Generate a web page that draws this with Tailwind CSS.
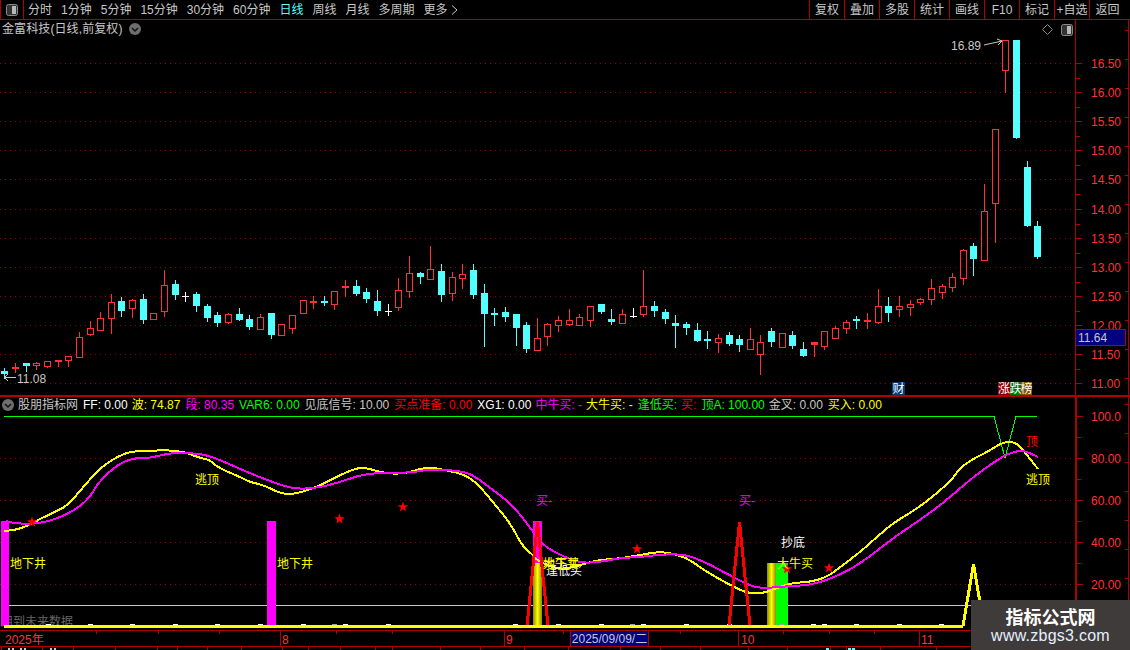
<!DOCTYPE html>
<html>
    <head>
        <meta charset="utf-8">
        <title>金富科技</title>
        <script src="https://cdn.jsdelivr.net/npm/@tailwindcss/browser@4"></script>
    </head>
    <body class="bg-black">
        <div class="relative flex flex-col w-[1130px] h-[650px] overflow-hidden bg-black text-[12px] leading-none text-[#c8c8c8] font-['Liberation_Sans','Noto_Sans_CJK_SC',sans-serif]">
            <!-- top toolbar -->
            <nav class="flex items-center h-[20px] shrink-0 border-b border-[#b00000]">
                <div class="flex items-center justify-center w-[24px] h-full border-x border-[#b00000]">
                    <svg width="12" height="12" viewBox="0 0 12 12"><rect x="0.5" y="0.5" width="11" height="11" rx="2" fill="#333" stroke="#8a8a8a"/><rect x="6" y="2" width="4" height="8" fill="#b8b8b8"/></svg>
                </div>
                <ul class="flex items-center ml-[4px] gap-[9px]">
                    <li>分时</li>
                    <li>1分钟</li>
                    <li>5分钟</li>
                    <li>15分钟</li>
                    <li>30分钟</li>
                    <li>60分钟</li>
                    <li class="text-[#54ffff]">日线</li>
                    <li>周线</li>
                    <li>月线</li>
                    <li>多周期</li>
                    <li class="flex items-center gap-[3px]">更多
                        <svg width="7" height="10" viewBox="0 0 7 10"><path d="M1 0.5 L6 5 L1 9.5" fill="none" stroke="#c8c8c8"/></svg>
                    </li>
                </ul>
                <ul class="flex h-full ml-auto mr-[5px] text-center">
                    <li class="flex items-center justify-center w-[35px] border-l border-[#b00000]">复权</li>
                    <li class="flex items-center justify-center w-[35px] border-l border-[#b00000]">叠加</li>
                    <li class="flex items-center justify-center w-[35px] border-l border-[#b00000]">多股</li>
                    <li class="flex items-center justify-center w-[35px] border-l border-[#b00000]">统计</li>
                    <li class="flex items-center justify-center w-[35px] border-l border-[#b00000]">画线</li>
                    <li class="flex items-center justify-center w-[35px] border-l border-[#b00000]">F10</li>
                    <li class="flex items-center justify-center w-[35px] border-l border-[#b00000]">标记</li>
                    <li class="flex items-center justify-center w-[35px] border-l border-[#b00000] whitespace-nowrap">+自选</li>
                    <li class="flex items-center justify-center w-[36px] border-l border-[#b00000]">返回</li>
                </ul>
            </nav>

            <!-- price chart -->
            <section class="relative h-[377px] shrink-0 border-b-2 border-[#b00000]">
                <svg id="price" class="absolute inset-0" width="1130" height="375" viewBox="0 20 1130 375" shape-rendering="crispEdges"></svg>
                <div class="absolute left-[2px] top-[3px] flex items-center gap-[6px]">
                    <span class="tracking-[0.1px]">金富科技(日线,前复权)</span>
                    <svg width="12" height="12" viewBox="0 0 12 12"><circle cx="6" cy="6" r="6" fill="#6e6e6e"/><path d="M3 5 L6 8 L9 5" fill="none" stroke="#111" stroke-width="1.5"/></svg>
                </div>
                <svg class="absolute left-[1042px] top-[4px]" width="11" height="11" viewBox="0 0 11 11"><path d="M5.5 0.5 L10.5 5.5 L5.5 10.5 L0.5 5.5 Z" fill="none" stroke="#8a8a8a"/></svg>
                <svg class="absolute left-[1061px] top-[4px]" width="12" height="12" viewBox="0 0 12 12"><rect x="0.5" y="0.5" width="11" height="11" rx="2" fill="#333" stroke="#8a8a8a"/><rect x="6" y="2" width="4" height="8" fill="#b8b8b8"/></svg>
                <div class="absolute left-[1075px] top-[309px] w-[51px] h-[17px] pl-[2px] flex items-center bg-[#000080] border border-[#b00000]">11.64</div>
                <span class="absolute left-[892px] top-[362px] w-[13px] h-[13px] flex items-center justify-center bg-[#003c78] text-white">财</span>
                <div class="absolute left-[998px] top-[362px] flex h-[13px] text-white">
                    <span class="w-[12px] flex items-center justify-center bg-[#8c0000]">涨</span>
                    <span class="w-[11px] flex items-center justify-center bg-[#007800]">跌</span>
                    <span class="w-[11px] flex items-center justify-center bg-[#8c5000]">榜</span>
                </div>
            </section>

            <!-- indicator panel -->
            <section class="relative h-[234px] shrink-0 border-b border-[#b00000]">
                <svg id="ind" class="absolute inset-0" width="1130" height="233" viewBox="0 397 1130 233"></svg>
                <div class="absolute left-[2px] top-[2px] flex items-center whitespace-nowrap gap-[5px]">
                    <svg class="mr-[-1px]" width="12" height="12" viewBox="0 0 12 12"><circle cx="6" cy="6" r="6" fill="#6e6e6e"/><path d="M3 5 L6 8 L9 5" fill="none" stroke="#111" stroke-width="1.5"/></svg>
                    <span>股朋指标网</span>
                    <span class="text-white">FF: 0.00</span>
                    <span class="text-[#ffff00] ml-[-1px]">波: 74.87</span>
                    <span class="text-[#ff00ff]">段: 80.35</span>
                    <span class="text-[#00ff00]">VAR6: 0.00</span>
                    <span>见底信号: 10.00</span>
                    <span class="text-[#ff0000]">买点准备: 0.00</span>
                    <span class="text-white">XG1: 0.00</span>
                    <span class="text-[#ff00ff] ml-[-1px]">中牛买: -</span>
                    <span class="text-[#ffff00] ml-[-1px]">大牛买: -</span>
                    <span class="text-[#00ff00]">逢低买:</span>
                    <span class="text-[#ff0000] ml-[-1px]">买:</span>
                    <span class="text-[#00ff00]">顶A: 100.00</span>
                    <span class="ml-[-1px]">金叉: 0.00</span>
                    <span class="text-[#ffff00]">买入: 0.00</span>
                </div>
            </section>

            <!-- date axis -->
            <section class="relative h-[16px] shrink-0 border-b border-[#b00000] text-[#ff3232]">
                <svg id="dates" class="absolute inset-0" width="1130" height="15" viewBox="0 631 1130 15" shape-rendering="crispEdges"></svg>
                <span class="absolute left-[5px] top-[3px]">2025年</span>
                <span class="absolute left-[282px] top-[3px]">8</span>
                <span class="absolute left-[506px] top-[3px]">9</span>
                <span class="absolute left-[741px] top-[3px]">10</span>
                <span class="absolute left-[921px] top-[3px]">11</span>
                <span class="absolute left-[570px] top-0 w-[79px] h-[15px] flex items-center justify-center bg-[#000080] border-x border-[#b00000] text-[#c8c8c8]">2025/09/09/二</span>
            </section>

            <!-- clipped tab strip -->
            <svg id="tabs" class="shrink-0" width="1130" height="3" viewBox="0 647 1130 3" shape-rendering="crispEdges"></svg>

            <!-- watermark -->
            <div class="absolute left-[971px] top-[600px] w-[159px] h-[50px] flex flex-col items-center justify-center gap-[3px] bg-[#3f3b3b]">
                <span class="text-[18px] font-bold text-white font-['Noto_Sans_CJK_SC',sans-serif]">指标公式网</span>
                <span class="text-[16px] tracking-[0.25px] text-[#e4f0ff] font-['Liberation_Sans',sans-serif]">www.zbgs3.com</span>
            </div>
        </div>

        <script>
            const NS = 'http://www.w3.org/2000/svg';
            const RED = '#ff3232', CYAN = '#54ffff', AXIS = '#b00000', DOT = '#900000';

            function add(parent, tag, attrs, text) {
                const el = document.createElementNS(NS, tag);
                for (const k in attrs) el.setAttribute(k, attrs[k]);
                if (text) el.textContent = text;
                parent.appendChild(el);
                return el;
            }
            function line(svg, x1, y1, x2, y2, color, extra) {
                return add(svg, 'line', Object.assign({x1, y1, x2, y2, stroke: color, 'stroke-width': 1}, extra || {}));
            }
            function label(svg, x, y, str, color, extra) {
                return add(svg, 'text', Object.assign({x, y, fill: color, 'font-size': 12, 'shape-rendering': 'auto'}, extra || {}), str);
            }
            // round off the hand read points so the curves don't look like polygons
            function smooth(str) {
                let pts = str.split(' ').map(p => p.split(',').map(Number));
                for (let n = 0; n < 2; n++) {
                    const out = [pts[0]];
                    for (let i = 0; i < pts.length - 1; i++) {
                        const [a, b] = [pts[i], pts[i + 1]];
                        out.push([a[0] * .75 + b[0] * .25, a[1] * .75 + b[1] * .25]);
                        out.push([a[0] * .25 + b[0] * .75, a[1] * .25 + b[1] * .75]);
                    }
                    out.push(pts[pts.length - 1]);
                    pts = out;
                }
                return pts.map(p => p[0].toFixed(1) + ',' + p[1].toFixed(1)).join(' ');
            }

            // [type, high, bodyTop, bodyBottom, low]  c cyan, r red hollow, R red flat, w white doji
            const candles = [
                ['c',368,371,374,378],['R',363,367,369,372],['c',363,363,366,371],['r',362,363,365,369],['r',361,361,366,367],
                ['R',360,360,362,366],['r',356,356,360,366],['r',332,337,357,357],['r',321,328,334,335],['r',312,318,330,330],
                ['r',294,302,318,333],['c',297,301,311,316],['r',299,300,308,317],['c',294,299,320,323],['r',313,313,319,319],
                ['r',270,285,311,316],['c',280,284,295,299],['w',292,296,297,301],['c',292,294,306,311],['c',304,306,318,321],
                ['c',312,315,323,326],['r',313,314,322,323],['c',308,314,320,320],['c',315,319,327,329],['r',314,317,329,329],
                ['c',313,313,335,338],['r',324,324,335,335],['r',315,315,328,333],['r',300,300,313,313],['R',296,301,303,308],
                ['c',296,301,303,305],['r',291,291,304,309],['R',280,286,288,296],['c',280,286,294,295],['c',288,292,299,302],
                ['c',290,301,311,315],['w',304,311,312,315],['r',278,290,307,310],['r',256,273,291,297],['c',272,273,277,283],
                ['r',246,269,279,279],['c',264,271,295,301],['r',272,277,293,300],['r',264,274,278,288],['c',264,270,295,298],
                ['c',284,293,314,346],['c',308,313,314,325],['c',307,312,317,321],['c',314,314,328,345],['c',322,325,349,352],
                ['r',318,338,350,350],['r',323,324,336,345],['r',316,320,325,331],['r',309,320,324,325],['r',314,317,325,325],
                ['r',306,306,320,326],['c',304,304,312,313],['c',309,319,322,324],['r',309,314,323,323],['w',308,316,317,317],
                ['r',270,306,314,316],['c',301,306,311,316],['c',309,312,319,323],['c',315,323,326,347],['c',322,324,328,334],
                ['c',323,330,341,341],['c',331,339,340,348],['r',334,338,342,352],['c',332,335,344,345],['c',335,339,345,351],
                ['r',328,339,349,349],['r',335,342,354,374],['c',328,331,342,346],['r',333,333,347,347],['c',331,335,346,348],
                ['c',342,349,356,356],['R',342,342,345,356],['r',331,331,346,349],['r',326,328,338,338],['r',320,322,328,333],
                ['c',316,319,321,328],['R',313,320,322,328],['r',289,306,322,323],['c',297,306,313,321],['r',296,306,309,316],
                ['r',300,304,307,315],['r',298,299,302,304],['r',279,288,299,304],['r',284,286,292,298],['r',273,277,287,291],
                ['r',249,250,278,284],['c',243,246,259,275],['r',184,211,260,260],['r',129,129,203,242],['r',40,40,70,92],
                ['c',40,40,138,138],['c',161,167,226,226],['c',221,226,257,258]
            ];

            // price chart
            const price = document.getElementById('price');
            const priceLabels = ['16.50','16.00','15.50','15.00','14.50','14.00','13.50','13.00','12.50','12.00','11.50','11.00'];
            priceLabels.forEach((t, i) => {
                const y = Math.round(63 + i * 29.1);
                line(price, 0, y + .5, 1075, y + .5, DOT, {'stroke-dasharray': '1 4'});
                line(price, 1076, y + .5, 1082, y + .5, AXIS);
                line(price, 1076, y + 15.5, 1080, y + 15.5, AXIS);
                label(price, 1091, y + 5, t, RED);
            });
            line(price, 1075.5, 20, 1075.5, 395, AXIS);
            line(price, 1128.5, 20, 1128.5, 395, AXIS);
            for (let y = 30; y < 395; y += 29) line(price, 1125, y + .5, 1128, y + .5, AXIS);

            candles.forEach((c, i) => {
                const x = Math.round(4.3 + i * 10.65);
                const [type, high, top, bottom, low] = c;
                const color = type === 'c' ? CYAN : type === 'w' ? '#ffffff' : RED;
                line(price, x + .5, high, x + .5, low + 1, color);
                if (type === 'r') {
                    add(price, 'rect', {x: x - 2.5, y: top + .5, width: 6, height: bottom - top, fill: '#000', stroke: color});
                } else if (type === 'w') {
                    line(price, x - 3, top + .5, x + 4, top + .5, color);
                } else {
                    add(price, 'rect', {x: x - 3, y: top, width: 7, height: Math.max(bottom - top, 2), fill: color});
                }
            });

            label(price, 951, 50, '16.89', '#c8c8c8');
            add(price, 'path', {d: 'M984 45 L1002 41 M997 39 L1002 41 L998 45', fill: 'none', stroke: '#c8c8c8', 'shape-rendering': 'auto'});
            label(price, 17, 383, '11.08', '#c8c8c8');
            add(price, 'path', {d: 'M16 377.5 L5 377.5 M8 374 L5 377.5 L8 381', fill: 'none', stroke: '#c8c8c8'});

            // indicator panel
            const ind = document.getElementById('ind');
            const defs = add(ind, 'defs', {});
            const grad = add(defs, 'linearGradient', {id: 'gold', x1: 0, y1: 0, x2: 1, y2: 0});
            add(grad, 'stop', {offset: '0', 'stop-color': '#8c8c00'});
            add(grad, 'stop', {offset: '.5', 'stop-color': '#ffff00'});
            add(grad, 'stop', {offset: '1', 'stop-color': '#8c8c00'});

            [['100.0',416],['80.00',458],['60.00',500],['40.00',542],['20.00',584]].forEach(([t, y]) => {
                if (t !== '100.0') line(ind, 0, y + .5, 1075, y + .5, DOT, {'stroke-dasharray': '1 4', 'shape-rendering': 'crispEdges'});
                line(ind, 1077, y + .5, 1083, y + .5, AXIS);
                line(ind, 1077, y + 21.5, 1081, y + 21.5, AXIS);
                label(ind, 1091, y + 5, t, RED);
            });
            add(ind, 'rect', {x: 1075, y: 397, width: 2, height: 233, fill: AXIS});
            line(ind, 1128.5, 397, 1128.5, 630, AXIS);
            for (let y = 404; y < 630; y += 29) line(ind, 1125, y + .5, 1128, y + .5, AXIS);

            label(ind, 1, 626, '用到未来数据', '#666666');
            line(ind, 4, 605.5, 1075, 605.5, '#c8c8c8');
            [[1,9],[267,276]].forEach(([a, b]) => add(ind, 'rect', {x: a, y: 521, width: b - a, height: 105, fill: '#ff00ff'}));
            add(ind, 'rect', {x: 533, y: 521, width: 9, height: 42, fill: '#ff00ff'});
            add(ind, 'rect', {x: 533, y: 563, width: 9, height: 63, fill: 'url(#gold)'});
            add(ind, 'rect', {x: 767, y: 563, width: 9, height: 63, fill: 'url(#gold)'});
            add(ind, 'rect', {x: 776, y: 563, width: 12, height: 63, fill: '#00ff00'});

            [46,88,130,173,215,258,301,343,386,513,556,599,641,684,727,811,822,854,897,939].forEach(x => {
                add(ind, 'rect', {x, y: 624, width: 5, height: 2, fill: '#ffffff'});
            });
            [332,630,779].forEach(x => add(ind, 'rect', {x, y: 624, width: 5, height: 2, fill: '#a0a0a0'}));

            add(ind, 'polyline', {points: '4,416.5 994,416.5 1005,458 1016,416.5 1037,416.5', fill: 'none', stroke: '#00ff00', 'stroke-width': 1, 'shape-rendering': 'crispEdges'});

            const yellow = '4,531 15,530 27,526 40,519 55,512 68,505 85,485 100,468 120,455 135,451 150,451 165,450 185,452 200,458 210,460 217,467 240,477 250,482 263,485 282,494 295,494 317,487 340,475 357,468 367,468 383,473 403,474 427,467 440,469 463,474 477,483 497,507 510,523 523,547 533,555 538,561 557,569 570,568 587,563 600,560 623,558 640,555 657,552 670,553 687,558 707,572 730,585 747,593 760,593 767,592 790,583 810,582 827,577 843,565 860,552 877,537 893,523 920,507 950,482 960,468 973,459 987,452 1003,442 1016,442 1027,455 1038,469';
            const magenta = '6,521 14,523 27,524 47,522 70,513 88,500 100,480 120,463 135,458 150,458 170,453 190,453 207,455 227,463 247,472 267,480 293,489 317,488 340,482 367,473 407,473 433,469 460,471 473,475 493,490 510,503 523,518 533,532 543,545 560,555 580,563 600,562 620,558 640,557 667,554 687,555 707,563 733,577 753,587 767,588 790,586 810,585 833,578 860,564 893,538 920,520 943,503 973,477 1000,458 1010,453 1023,450 1038,457';
            add(ind, 'polyline', {points: smooth(yellow), fill: 'none', stroke: '#ffff00', 'stroke-width': 2, 'shape-rendering': 'crispEdges'});
            add(ind, 'polyline', {points: smooth(magenta), fill: 'none', stroke: '#ff00ff', 'stroke-width': 2, 'shape-rendering': 'crispEdges'});

            add(ind, 'polyline', {points: '527,626 537.5,522 548,626', fill: 'none', stroke: '#ff0000', 'stroke-width': 3, 'shape-rendering': 'crispEdges'});
            add(ind, 'polyline', {points: '729,626 739.5,522 750,626', fill: 'none', stroke: '#ff0000', 'stroke-width': 3, 'shape-rendering': 'crispEdges'});
            add(ind, 'polyline', {points: '963,626 973.5,564 984,626', fill: 'none', stroke: '#ffff00', 'stroke-width': 3, 'shape-rendering': 'crispEdges'});
            add(ind, 'rect', {x: 4, y: 625, width: 959, height: 3, fill: '#ffff00'});

            [[32,522],[339.5,519],[403,507],[637,549],[787,569],[829,568]].forEach(([x, y]) => {
                const pts = [];
                for (let i = 0; i < 10; i++) {
                    const r = i % 2 ? 2.2 : 5.5, a = -Math.PI / 2 + i * Math.PI / 5;
                    pts.push((x + r * Math.cos(a)).toFixed(1) + ',' + (y + r * Math.sin(a)).toFixed(1));
                }
                add(ind, 'polygon', {points: pts.join(' '), fill: '#ff0000'});
            });

            [[195,484,'逃顶','#ffff00'],[1026,484,'逃顶','#ffff00'],[1026,446,'顶','#ff0000'],
             [536,505,'买-','#ff00ff'],[739,505,'买-','#ff00ff'],
             [10,568,'地下井','#ffff00'],[277,568,'地下井','#ffff00'],
             [781,547,'抄底','#ffffff'],
             [546,575,'逢低买','#ffffff'],[543,568,'地下井','#ffff00'],[543,568,'大牛买','#ffff00'],[777,568,'大牛买','#ffff00']
            ].forEach(([x, y, t, c]) => label(ind, x, y, t, c));

            // date axis ticks
            const dates = document.getElementById('dates');
            line(dates, 1075.5, 631, 1075.5, 646, AXIS);
            line(dates, 1128.5, 631, 1128.5, 646, AXIS);
            [280,504,738,919].forEach(x => line(dates, x + .5, 631, x + .5, 646, AXIS));
            [96,158,219,336,392,563,680,783,829,874].forEach(x => line(dates, x + .5, 631, x + .5, 634, AXIS));

            // tab strip
            const tabs = document.getElementById('tabs');
            [1,42,73,115,157,177,207,241,282,308,340,375,392,440,480,524,568,620,660,700,748,787,830,846,880,936].forEach(x => {
                line(tabs, x + .5, 647, x + .5, 650, AXIS);
            });
            [8,12,20,24,50,54].forEach(x => add(tabs, 'rect', {x, y: 648, width: 2, height: 2, fill: '#c8c8c8'}));
            [826,848,852].forEach(x => add(tabs, 'rect', {x, y: 648, width: 3, height: 2, fill: CYAN}));
        </script>
    </body>
</html>
